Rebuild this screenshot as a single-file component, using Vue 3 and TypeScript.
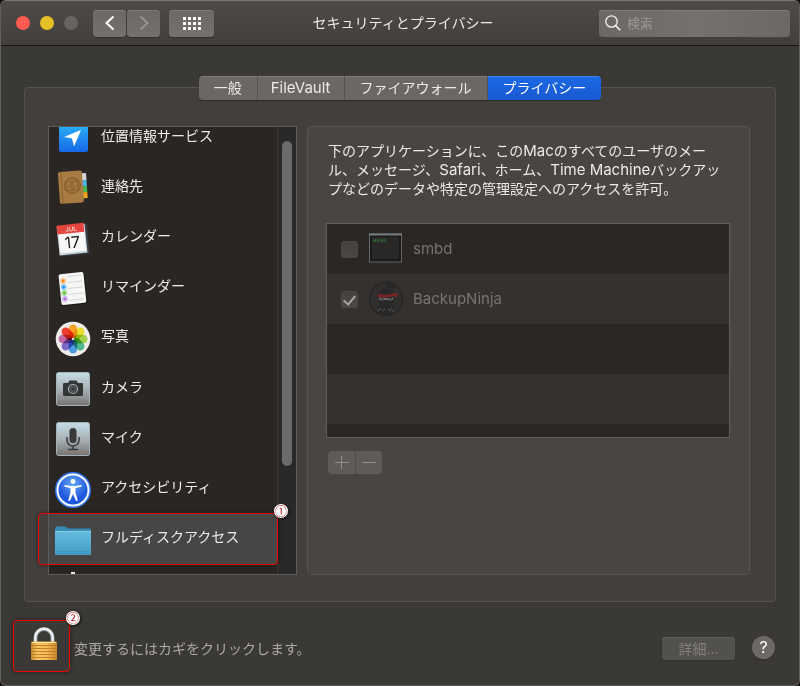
<script setup lang="ts">
import { ref } from 'vue'

interface Service {
  id: string
  label: string
}

interface AppEntry {
  id: string
  name: string
  allowed: boolean
}

const tabs: string[] = ['一般', 'FileVault', 'ファイアウォール', 'プライバシー']
const activeTab = ref(3)

const services: Service[] = [
  { id: 'location', label: '位置情報サービス' },
  { id: 'contacts', label: '連絡先' },
  { id: 'calendar', label: 'カレンダー' },
  { id: 'reminders', label: 'リマインダー' },
  { id: 'photos', label: '写真' },
  { id: 'camera', label: 'カメラ' },
  { id: 'mic', label: 'マイク' },
  { id: 'access', label: 'アクセシビリティ' },
  { id: 'disk', label: 'フルディスクアクセス' },
  { id: 'gear', label: '' },
]
const selected = ref('disk')

const apps = ref<AppEntry[]>([
  { id: 'smbd', name: 'smbd', allowed: false },
  { id: 'ninja', name: 'BackupNinja', allowed: true },
])

const petals: string[] = ['#f7a12b', '#e8df2c', '#a4cf4a', '#4fb58c', '#4f9be0', '#7b6cc9', '#c66aa8', '#ee3f2f']
const reminderDots: string[] = ['#ff8a1c', '#1e9bf0', '#5bc236', '#b06adf']
</script>

<template>
  <div class="window">
    <header class="toolbar">
      <div class="controls">
        <div class="lights">
          <span class="light red"></span>
          <span class="light yellow"></span>
          <span class="light grey"></span>
        </div>
        <div class="nav">
          <button class="tool" type="button">
            <svg width="12" height="16" viewBox="0 0 12 16"><path d="M9.5 1.5L2.5 8l7 6.500" fill="none" stroke="#fff" stroke-width="2" /></svg>
          </button>
          <button class="tool" type="button" disabled>
            <svg width="12" height="16" viewBox="0 0 12 16"><path d="M2.500 1.500L9.500 8l-7 6.500" fill="none" stroke="#a09e9b" stroke-width="1.600" /></svg>
          </button>
        </div>
        <button class="tool wide" type="button">
          <svg width="18" height="13" viewBox="0 0 18 13" fill="#fff">
            <template v-for="r in 3" :key="r">
              <rect v-for="c in 4" :key="c" :x="(c - 1) * 5" :y="(r - 1) * 5" width="3" height="3" />
            </template>
          </svg>
        </button>
      </div>
      <h1 class="title">セキュリティとプライバシー</h1>
      <label class="search">
        <svg width="16" height="16" viewBox="0 0 16 16" fill="none" stroke="#f2f1f0" stroke-width="1.300">
          <circle cx="6.500" cy="6.500" r="5.700" />
          <path d="M10.600 10.600L15.300 15.300" stroke-width="1.600" />
        </svg>
        <input type="search" placeholder="検索" />
      </label>
    </header>

    <main class="content">
      <div class="tabs" role="tablist">
        <button
          v-for="(tab, i) in tabs"
          :key="tab"
          type="button"
          role="tab"
          class="tab"
          :class="{ active: i === activeTab, latin: tab === 'FileVault' }"
          :aria-selected="i === activeTab"
          @click="activeTab = i"
        >{{ tab }}</button>
      </div>

      <section class="group">
        <div class="sidebar">
          <div class="viewport">
            <ul class="services">
              <li v-for="s in services" :key="s.id">
                <button type="button" class="service" :class="{ selected: s.id === selected }" @click="selected = s.id">
                  <svg class="icon" width="36" height="36" viewBox="0 0 36 36">
                    <defs>
                      <linearGradient id="blueSquare" x2="0" y2="1"><stop stop-color="#2cb4f8" /><stop offset="1" stop-color="#1668e8" /></linearGradient>
                      <linearGradient id="metal" x2="0" y2="1"><stop stop-color="#c5dce7" /><stop offset=".5" stop-color="#a9b2b7" /><stop offset="1" stop-color="#77736f" /></linearGradient>
                      <linearGradient id="folder" x2="0" y2="1"><stop stop-color="#65b9dc" /><stop offset="1" stop-color="#459fc9" /></linearGradient>
                      <radialGradient id="ball" cy=".3"><stop stop-color="#65a6f6" /><stop offset="1" stop-color="#1f58dd" /></radialGradient>
                    </defs>
                    <g v-if="s.id === 'location'">
                      <rect x="4" y="3" width="29" height="29" rx="2" fill="url(#blueSquare)" />
                      <path d="M26 10L19 26.500L17 18.500L9 17Z" fill="#fff" />
                    </g>
                    <g v-else-if="s.id === 'contacts'">
                      <g transform="rotate(-4 18 18)">
                        <rect x="25" y="4" width="7" height="7" fill="#d5d8d6" />
                        <rect x="25" y="11" width="7" height="6" fill="#4fb6e0" />
                        <rect x="25" y="17" width="7" height="6" fill="#4eb54c" />
                        <rect x="25" y="23" width="7" height="6" fill="#f0a51e" />
                        <rect x="4" y="1" width="24" height="32" rx="2" fill="#a87c43" />
                        <path d="M7 1V33" stroke="#8a632f" />
                        <circle cx="17.500" cy="15.500" r="8" fill="#9c713b" stroke="#83602f" />
                        <g fill="#a87c43" stroke="#805b2a" stroke-width=".8">
                          <path d="M10.500 20q.5-2.500 3-3q-2-2-1.500-5q1.500-2.500 4 0q.5 3-1 5q2 .5 2.500 3z" />
                          <path d="M17.500 20q.5-2.500 2.500-3q-2-2-1.500-5q1.500-2.500 4 0q.5 3-1 5q2 .5 2.500 3z" />
                        </g>
                      </g>
                    </g>
                    <g v-else-if="s.id === 'calendar'" transform="rotate(-6 18 18)">
                      <rect x="4" y="4" width="29" height="30" rx="1" fill="#39424a" />
                      <rect x="3" y="4" width="28" height="29" fill="#c9d3da" />
                      <rect x="4" y="4" width="26" height="27" fill="#f8f8f8" />
                      <rect x="3" y="3" width="27" height="9" fill="#e4453f" />
                      <text x="17" y="10" class="month">JUL</text>
                      <text x="17" y="27" class="day">17</text>
                    </g>
                    <g v-else-if="s.id === 'reminders'" transform="rotate(-6 18 18)">
                      <rect x="5" y="3" width="26" height="31" rx="2" fill="#161413" />
                      <rect x="5" y="2" width="25" height="31" rx="2" fill="#f6f6f5" />
                      <g v-for="(c, i) in reminderDots" :key="c">
                        <circle cx="9" :cy="9 + i * 6" r="2.600" fill="none" :stroke="c" stroke-width=".5" />
                        <circle cx="9" :cy="9 + i * 6" r="1.700" :fill="c" />
                        <path :d="`M13 ${11 + i * 6}H28`" stroke="#c9c9c9" stroke-width=".7" />
                      </g>
                      <path d="M13 5H28" stroke="#c9c9c9" stroke-width=".7" />
                    </g>
                    <g v-else-if="s.id === 'photos'">
                      <circle cx="18" cy="18" r="17.300" fill="#eeedeb" />
                      <g class="petals">
                        <rect
                          v-for="(c, i) in petals"
                          :key="c"
                          x="13.800"
                          y="3.500"
                          width="8.400"
                          height="14"
                          rx="4.200"
                          :fill="c"
                          :transform="`rotate(${i * 45} 18 18)`"
                        />
                      </g>
                      <circle cx="18" cy="18" r="1" fill="#fff" />
                    </g>
                    <g v-else-if="s.id === 'camera'">
                      <rect x="1.500" y="1.500" width="33" height="33" rx="2" fill="url(#metal)" stroke="#a3b3bb" />
                      <path d="M9 12h4l1.500-2.500h7L23 12h4q1 0 1 1v11q0 1-1 1H9q-1 0-1-1V13q0-1 1-1z" fill="#343536" />
                      <circle cx="18" cy="18" r="4.500" fill="#3d3f40" stroke="#a8aeb1" stroke-width="1.200" />
                      <circle cx="18" cy="18" r="2.500" fill="none" stroke="#67696a" stroke-width=".7" />
                    </g>
                    <g v-else-if="s.id === 'mic'">
                      <rect x="1.500" y="1.500" width="33" height="33" rx="2" fill="url(#metal)" stroke="#a3b3bb" />
                      <rect x="14.500" y="7" width="7" height="15" rx="3.500" fill="#38393a" />
                      <path d="M12 16v3a6 6 0 0 0 12 0v-3M18 25v3M13 28.500h10" fill="none" stroke="#38393a" stroke-width="1.500" />
                    </g>
                    <g v-else-if="s.id === 'access'">
                      <circle cx="18" cy="18" r="18" fill="#2f73e8" />
                      <circle cx="18" cy="18" r="15.500" fill="url(#ball)" stroke="#f7fbff" stroke-width="2" />
                      <circle cx="18" cy="9.500" r="2.400" fill="#fff" />
                      <path d="M9.500 13l6.500 1h4l6.500-1v1.800L20.500 16v4.500l2.300 8-1.700.5L18 22l-3.100 7-1.700-.5 2.300-8V16l-6-1.200z" fill="#fff" />
                    </g>
                    <g v-else-if="s.id === 'disk'">
                      <path d="M0 7q0-2.500 2-2.500h8q1.500 0 2.500 2h22q1.500 0 1.500 1.500v5H0z" fill="#368cb5" />
                      <path d="M0 9.500h36V32q0 1-1 1H1q-1 0-1-1z" fill="url(#folder)" />
                      <path d="M0 9.500H36" stroke="#83cce8" />
                      <path d="M1 31.500H35M1 29.500H35" stroke="#398db5" stroke-width=".7" />
                    </g>
                    <g v-else fill="#ecebea">
                      <rect x="16" y="0" width="4" height="8" />
                      <rect x="9" y="2" width="2" height="3" />
                      <rect x="25" y="2" width="2" height="3" />
                    </g>
                  </svg>
                  <span v-if="s.label">{{ s.label }}</span>
                </button>
              </li>
            </ul>
            <div class="scrollbar"><span class="thumb"></span></div>
          </div>
          <div class="callout row-callout"><span class="marker">①</span></div>
        </div>

        <div class="panel">
          <p class="note">
            下のアプリケーションに、この<span class="latin">Mac</span>のすべてのユーザのメー<br />ル、メッセージ、<span class="latin">Safari</span>、ホーム、<span class="latin">Time Machine</span>バックアッ<br />プなどのデータや特定の管理設定へのアクセスを許可。
          </p>
          <ul class="apps">
            <li v-for="app in apps" :key="app.id">
              <label class="app">
                <input v-model="app.allowed" type="checkbox" class="check" disabled />
                <svg v-if="app.id === 'smbd'" width="36" height="36" viewBox="0 0 36 36">
                  <rect x="1.500" y="3" width="32" height="28" fill="#1c1b1a" stroke="#626769" />
                  <path d="M1 3.500H34" stroke="#747b7f" stroke-width="2" />
                  <rect x="4" y="6" width="27" height="22" fill="#292827" />
                  <text x="5" y="11" class="exec">exec</text>
                </svg>
                <svg v-else width="36" height="36" viewBox="0 0 36 36">
                  <circle cx="18" cy="18" r="16.500" fill="#312f2e" stroke="#282727" stroke-width="2" />
                  <path d="M19 1l9 5-9 1z" fill="#262525" />
                  <path d="M10 15q0-8 8-8t8 8v5q-3 5-8 5t-8-5z" fill="#282828" />
                  <path d="M9 26q9-4 18 0l-3 7q-6 2-12 0z" fill="#272727" />
                  <path d="M11 16.500q7 1.500 14 0v2q-3 2-7 0-4 2-7 0z" fill="#7d7b7a" />
                  <path d="M12 17.500l4 1M24 17.500l-4 1" stroke="#222" />
                  <path d="M9.500 12.500q8 2.500 15.500 0l5-.5-1 4-4-1q-7 2.500-15 1z" fill="#7d2422" />
                  <path d="M10 30l3-3M23 27l3 4M14 30l3-2M20 28l3 2" fill="none" stroke="#5c5d5e" />
                </svg>
                <span>{{ app.name }}</span>
              </label>
            </li>
            <li class="blank"></li>
            <li class="blank"></li>
            <li class="rest"></li>
          </ul>
          <div class="edit">
            <button type="button" disabled><svg width="14" height="13" viewBox="0 0 14 13"><path d="M0 6.500H14M6.500 0V13" stroke="#91908e" /></svg></button>
            <button type="button" disabled><svg width="14" height="13" viewBox="0 0 14 13"><path d="M0 6.500H14" stroke="#91908e" /></svg></button>
          </div>
        </div>
      </section>
    </main>

    <footer class="footer">
      <button class="lock" type="button">
        <svg width="26" height="34" viewBox="0 0 26 34">
          <defs>
            <linearGradient id="brass"><stop stop-color="#c98a2b" /><stop offset=".25" stop-color="#f8c765" /><stop offset=".6" stop-color="#f5bd57" /><stop offset="1" stop-color="#c9852a" /></linearGradient>
          </defs>
          <path d="M4.500 16V10.500a8.500 8.500 0 0 1 17 0V16" fill="none" stroke="#8c9499" stroke-width="4" />
          <path d="M4.300 16V10.500a8.700 8.700 0 0 1 17.400 0V16" fill="none" stroke="#eef2f5" stroke-width="2.400" />
          <rect x="0" y="14.500" width="26" height="18.500" rx="1" fill="url(#brass)" />
          <path d="M0 18.500H26M0 21.500H26M0 24.500H26M0 27.500H26M0 30.500H26" stroke="#c07a22" stroke-width=".9" />
          <path d="M1 15.500H25" stroke="#ffe09a" />
        </svg>
        <span class="callout lock-callout"><span class="marker">②</span></span>
      </button>
      <p class="hint">変更するにはカギをクリックします。</p>
      <button class="details" type="button" disabled>詳細...</button>
      <button class="help" type="button">?</button>
    </footer>
  </div>
</template>

<style>
body {
  background: #14110f;
}
</style>

<style scoped>
.window,
.window * {
  box-sizing: border-box;
}
.window {
  display: flex;
  flex-direction: column;
  min-height: 100vh;
  border: 1px solid #605e5b;
  border-top-color: #7a7774;
  border-radius: 6px;
  overflow: hidden;
  background: #3b3935;
  color: #eceae8;
  font: 14px/19px Inter, "Noto Sans CJK JP", sans-serif;
}
button,
input {
  font: inherit;
  color: inherit;
}
button {
  display: flex;
  align-items: center;
  justify-content: center;
  padding: 0;
  border: 0;
  background: none;
}
ul,
p,
h1 {
  margin: 0;
  padding: 0;
  list-style: none;
}
svg {
  flex: none;
  display: block;
}
.latin {
  font-size: 15px;
}

.toolbar {
  display: grid;
  grid-template-columns: 1fr auto 1fr;
  align-items: center;
  height: 45px;
  padding: 0 9px 0 15px;
  border-bottom: 1px solid #161514;
  background: linear-gradient(#4e4b48, #413e3b);
}
.controls {
  display: flex;
  align-items: center;
}
.lights {
  display: flex;
  gap: 10px;
  margin-right: 15px;
}
.light {
  width: 14px;
  height: 14px;
  border-radius: 50%;
}
.red { background: #ff5b51; }
.yellow { background: #e6c029; }
.grey { background: #676564; }
.nav {
  display: flex;
  gap: 1px;
  margin-right: 9px;
}
.tool {
  width: 33px;
  height: 27px;
  border-radius: 4px;
  background: linear-gradient(#6b6865, #75726e);
  box-shadow: inset 0 1px #7e7b78, 0 1px 1px #33302e;
}
.tool.wide {
  width: 45px;
}
.title {
  font-size: 14px;
  font-weight: 400;
  line-height: 20px;
}
.search {
  display: flex;
  align-items: center;
  justify-self: end;
  gap: 6px;
  width: 191px;
  height: 27px;
  padding: 0 6px;
  border-radius: 4px;
  background: linear-gradient(90deg, #6b6865, #75726d 50%, #6c6965);
  box-shadow: inset 0 1px #7e7b78;
}
.search input {
  flex: 1;
  min-width: 0;
  padding: 0;
  border: 0;
  outline: 0;
  background: none;
  font-size: 13px;
}
.search input::placeholder {
  color: #9b9895;
}

.content {
  display: flex;
  flex-direction: column;
  padding: 30px 23px 0;
}
.tabs {
  position: relative;
  z-index: 1;
  display: flex;
  align-self: center;
  height: 24px;
  margin-bottom: -13px;
  border-radius: 4px;
  overflow: hidden;
  background: #6a6764;
  box-shadow: 0 1px 1px #302d2b;
}
.tab {
  padding: 0 15px 2px;
  border-right: 1px solid #54514f;
  box-shadow: inset 0 1px #7f7c79;
}
.tab.latin {
  padding: 0 13px 2px;
}
.tab.active {
  border: 0;
  background: linear-gradient(#1c69e6, #1859cf);
  color: #fff;
  box-shadow: inset 0 1px #3f80ea;
}
.group {
  display: flex;
  gap: 10px;
  padding: 38px 25px 26px 23px;
  border: 1px solid #55534f;
  border-radius: 4px;
  background: #433f3c;
}
.sidebar {
  position: relative;
  width: 249px;
  height: 449px;
}
.viewport {
  display: flex;
  height: 100%;
  border: 1px solid #5d5d5b;
  overflow: hidden;
  background: #2a2624;
}
.services {
  display: flex;
  flex: 1;
  flex-direction: column;
  height: 502px;
  margin-top: -15px;
}
.services li {
  display: flex;
  flex: 1;
}
.service {
  flex: 1;
  justify-content: flex-start;
  gap: 10px;
  padding: 2px 6px 0;
}
.service span {
  padding-bottom: 6px;
}
.service.selected {
  background: #464646;
}
.month {
  fill: #fff;
  font: 6px Inter, sans-serif;
  text-anchor: middle;
}
.day {
  fill: #222;
  font: 16px Inter, sans-serif;
  text-anchor: middle;
}
.exec {
  fill: #2f8a3c;
  font: 6px "DejaVu Sans Mono", monospace;
}
.petals {
  isolation: isolate;
}
.petals rect {
  mix-blend-mode: multiply;
}
.scrollbar {
  width: 19px;
  padding: 14px 4px 0;
  border-left: 1px solid #3b3937;
  background: #292929;
}
.thumb {
  display: block;
  width: 10px;
  height: 325px;
  border-radius: 5px;
  background: #6b6b6b;
}
.callout {
  position: absolute;
  border: 1px solid #f20000;
  border-radius: 4px;
  box-shadow: 0 0 4px rgba(0, 0, 0, 0.5);
  pointer-events: none;
}
.row-callout {
  top: 387px;
  right: 19px;
  left: -10px;
  height: 52px;
}
.lock-callout {
  inset: 0;
}
.marker {
  position: absolute;
  top: -10px;
  right: -11px;
  width: 14px;
  height: 14px;
  border-radius: 50%;
  background: #fff;
  color: #c8161d;
  font-family: "Noto Sans CJK JP", sans-serif;
  font-size: 12px;
  line-height: 14px;
  text-align: center;
  box-shadow: 1px 1px 3px #111;
}

.panel {
  flex: 1;
  min-width: 0;
  padding: 14px 19px 0 18px;
  border: 1px solid #575451;
  border-radius: 4px;
  background: #494541;
}
.note {
  margin-left: 2px;
  white-space: nowrap;
}
.note .latin {
  line-height: 1;
}
.apps {
  margin: 25px 0 13px;
  border: 1px solid #5f6060;
  background: #2b2725;
}
.apps li {
  height: 50px;
}
.apps li:nth-child(even) {
  background: #35312f;
}
.apps .rest {
  height: 13px;
}
.app {
  display: flex;
  align-items: center;
  height: 50px;
  padding-left: 14px;
  color: #777370;
  font-size: 15px;
}
.app svg {
  margin: 0 9px 0 10px;
}
.app span {
  padding-bottom: 1px;
}
.check {
  display: grid;
  place-items: center;
  appearance: none;
  width: 17px;
  height: 17px;
  margin: 1px 0 0;
  border: 1px solid #4a4845;
  border-radius: 3px;
  background: linear-gradient(#43403e, #4b4845);
}
.check:checked::after {
  content: "";
  width: 5px;
  height: 10px;
  margin-bottom: 2px;
  border: solid #a5a3a0;
  border-width: 0 2px 2px 0;
  transform: rotate(40deg);
}
.edit {
  display: flex;
  padding-left: 2px;
}
.edit button {
  width: 27px;
  height: 23px;
  border-radius: 4px 0 0 4px;
  background: #5e5b58;
}
.edit button:last-child {
  border-left: 1px solid #4d4a47;
  border-radius: 0 4px 4px 0;
}

.footer {
  display: flex;
  align-items: center;
  padding: 18px 24px 0 12px;
}
.lock {
  position: relative;
  width: 57px;
  height: 52px;
  padding: 0 0 4px 4px;
}
.hint {
  flex: 1;
  margin-left: 4px;
  padding-top: 4px;
  color: #aba9a6;
}
.details {
  width: 73px;
  height: 23px;
  margin-top: 4px;
  border-radius: 3px;
  background: #53514d;
  color: #84827e;
  box-shadow: inset 0 1px #5e5c58, 0 1px 1px #312f2c;
}
.help {
  width: 23px;
  height: 23px;
  margin: 2px 0 0 17px;
  border-radius: 50%;
  background: #6d6966;
  color: #fff;
  font-size: 16px;
  box-shadow: 0 1px 1px #312f2c;
}
</style>
